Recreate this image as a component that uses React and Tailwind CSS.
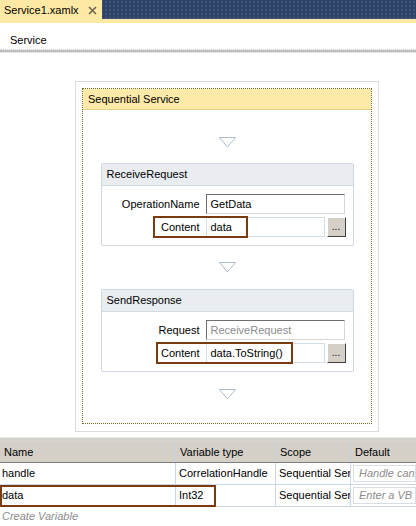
import React from "react";

function Arrow({ className }) {
  return (
    <svg width="17" height="11" viewBox="0 0 17 11" className={className}>
      <polygon points="0.5,0.5 16.5,0.5 8.5,10" fill="white" stroke="#aebbcb" />
    </svg>
  );
}

function Field({ label, value, muted, plain, width = "w-[139px]", button, highlight }) {
  return (
    <div className="relative flex items-center h-[20px]">
      <div className="w-[98px] text-right">{label}</div>
      <div
        className={
          "ml-[6px] h-[20px] flex items-center pl-[4px] bg-white " +
          width +
          (plain
            ? " border border-[#d3dde6]"
            : " border border-t-[#6f6f6f] border-l-[#6f6f6f] border-r-[#d6d6d6] border-b-[#d6d6d6]") +
          (muted ? " text-[#8c8c8c]" : " text-black")
        }
      >
        {value}
      </div>
      {button && (
        <div className="ml-[2px] w-[19px] h-[20px] bg-[#d4d0c8] border border-t-white border-l-white border-r-[#404040] border-b-[#404040] flex items-end justify-center pb-[4px] text-[10px] leading-none">
          ...
        </div>
      )}
      {highlight}
    </div>
  );
}

function Activity({ title, children, className }) {
  return (
    <div className={"w-[253px] border border-[#cfd7e2] rounded-[2px] " + className}>
      <div className="h-[22px] bg-[#e9ecf0] border-b border-[#d3dae3] flex items-center pl-[5px]">
        {title}
      </div>
      <div className="flex flex-col gap-[3px] pt-[8px] pb-[8px]">{children}</div>
    </div>
  );
}

export default function App() {
  const vars = [
    { name: "handle", type: "CorrelationHandle", scope: "Sequential Service", def: "Handle cannot be set" },
    { name: "data", type: "Int32", scope: "Sequential Service", def: "Enter a VB expression", mark: true },
  ];

  return (
    <div className="w-[416px] h-[526px] bg-white overflow-hidden text-[11px] text-black font-['Liberation_Sans',Arial,sans-serif]">
      {/* tab strip */}
      <div className="h-[19px] flex bg-[#2e4366] bg-[radial-gradient(#3e577c_1px,transparent_1px)] bg-[length:4px_4px]">
        <div className="w-[102px] bg-[#fde8a4] flex items-center pl-[4px] pt-[2px]">
          <span>Service1.xamlx</span>
          <svg width="9" height="9" viewBox="0 0 9 9" className="ml-auto mr-[5px]">
            <path d="M1 1L8 8M8 1L1 8" stroke="#6e6652" strokeWidth="1.6" />
          </svg>
        </div>
      </div>
      <div className="h-[4px] bg-[#fde8a4]" />

      {/* breadcrumb */}
      <div className="h-[26px] flex items-center pt-[8px] pl-[10px]">Service</div>
      <div className="border-t border-dotted border-[#d0d0d0]" />
      <div className="h-[2px] bg-[#bdbdbd]" />
      <div className="h-[1px] bg-[#e6e6e6]" />

      {/* designer */}
      <div className="ml-[75px] mt-[28px] w-[304px] border border-[#dadada] pt-[6px] px-[6px] pb-[7px]">
        <div className="h-[336px] border border-dotted border-[#7d6a22] flex flex-col">
          <div className="h-[21px] bg-[#fde9a8] border-b border-[#e8d28a] flex items-center pl-[5px]">
            Sequential Service
          </div>
          <div className="flex flex-col items-center">
            <Arrow className="mt-[27px]" />
            <Activity title="ReceiveRequest" className="mt-[15px]">
              <Field label="OperationName" value="GetData" />
              <Field
                label="Content"
                value="data"
                plain
                width="w-[119px]"
                button
                highlight={
                  <div className="absolute left-[51px] top-[-1px] w-[95px] h-[22px] border-2 border-[#7a3b0e]" />
                }
              />
            </Activity>
            <Arrow className="mt-[16px]" />
            <Activity title="SendResponse" className="mt-[16px]">
              <Field label="Request" value="ReceiveRequest" muted />
              <Field
                label="Content"
                value="data.ToString()"
                plain
                width="w-[119px]"
                button
                highlight={
                  <div className="absolute left-[54px] top-[-1px] w-[137px] h-[22px] border-2 border-[#7a3b0e]" />
                }
              />
            </Activity>
            <Arrow className="mt-[17px]" />
          </div>
        </div>
      </div>

      {/* variables grid */}
      <div className="mt-[5px] h-[5px] bg-[#d6d3ce] border-t border-[#e6e6e6]" />
      <div className="h-[21px] flex bg-[#d4d0c8] border-b border-[#7f7f7f]">
        <div className="w-[176px] pl-[4px] flex items-center border-r border-[#c4d2e4]">Name</div>
        <div className="w-[100px] pl-[4px] flex items-center border-r border-[#c4d2e4]">Variable type</div>
        <div className="w-[75px] pl-[4px] flex items-center border-r border-[#c4d2e4]">Scope</div>
        <div className="flex-1 pl-[4px] flex items-center">Default</div>
      </div>
      {vars.map((v) => (
        <div key={v.name} className="relative h-[22px] flex border-b border-[#cbd7e5]">
          <div className="w-[176px] pl-[2px] flex items-center border-r border-[#cbd7e5]">{v.name}</div>
          <div className="w-[100px] pl-[3px] flex items-center border-r border-[#cbd7e5] whitespace-nowrap">{v.type}</div>
          <div className="w-[75px] pl-[3px] flex items-center border-r border-[#cbd7e5] overflow-hidden whitespace-nowrap">
            {v.scope}
          </div>
          <div className="flex-1 min-w-0 pl-[2px] py-[2px] overflow-hidden">
            <div className="h-full border border-[#d7dee6] pl-[5px] flex items-center italic text-[#8c8c8c] whitespace-nowrap overflow-hidden">
              {v.def}
            </div>
          </div>
          {v.mark && (
            <div className="absolute left-0 top-0 w-[216px] h-[22px] border-2 border-[#7a3b0e]" />
          )}
        </div>
      ))}
      <div className="pl-[2px] pt-[1px] italic text-[#8c8c8c]">Create Variable</div>
    </div>
  );
}
